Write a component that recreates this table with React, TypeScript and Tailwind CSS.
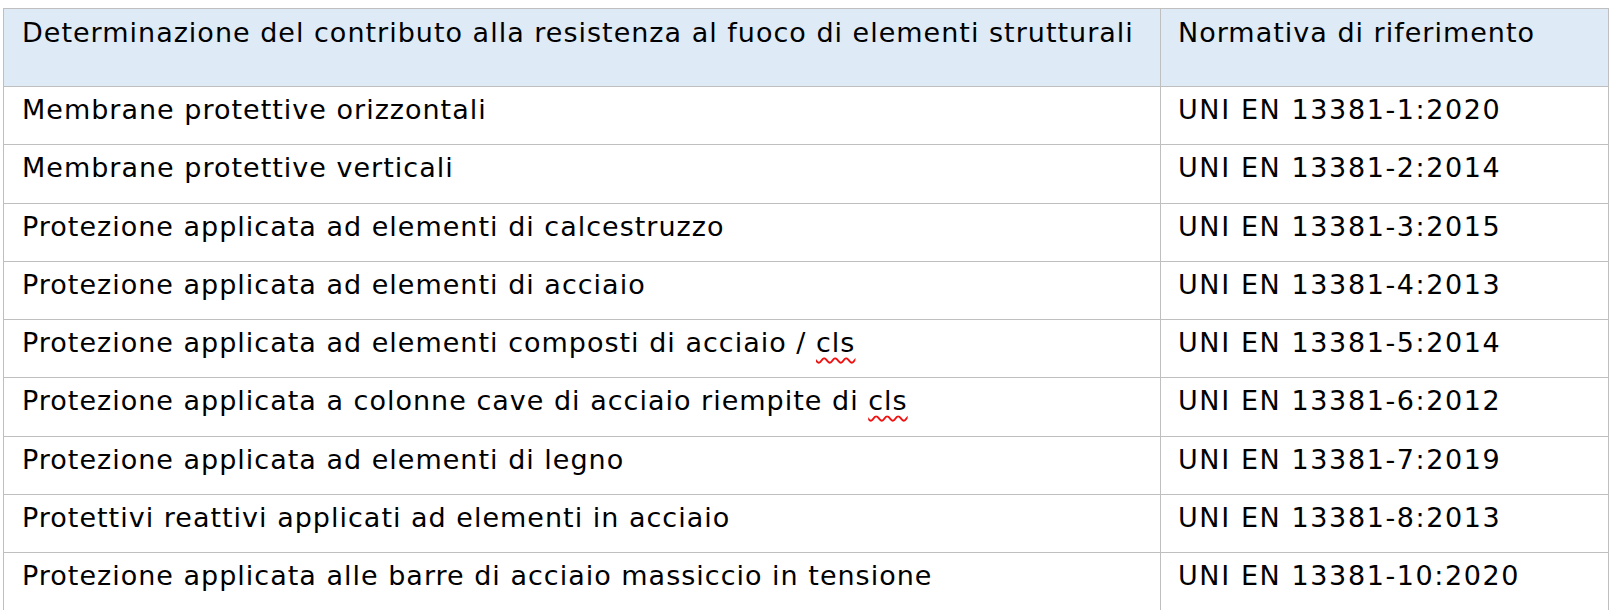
const rows: [string, string][] = [
  ["Membrane protettive orizzontali", "UNI EN 13381-1:2020"],
  ["Membrane protettive verticali", "UNI EN 13381-2:2014"],
  ["Protezione applicata ad elementi di calcestruzzo", "UNI EN 13381-3:2015"],
  ["Protezione applicata ad elementi di acciaio", "UNI EN 13381-4:2013"],
  ["Protezione applicata ad elementi composti di acciaio / |cls", "UNI EN 13381-5:2014"],
  ["Protezione applicata a colonne cave di acciaio riempite di |cls", "UNI EN 13381-6:2012"],
  ["Protezione applicata ad elementi di legno", "UNI EN 13381-7:2019"],
  ["Protettivi reattivi applicati ad elementi in acciaio", "UNI EN 13381-8:2013"],
  ["Protezione applicata alle barre di acciaio massiccio in tensione", "UNI EN 13381-10:2020"],
];

// "|" marks the word the spell checker underlined
const Label = ({ text }: { text: string }) => {
  const [plain, flagged] = text.split("|");
  return (
    <>
      {plain}
      {flagged && (
        <span className="underline decoration-wavy decoration-[#f01010] decoration-2 underline-offset-[5px]">
          {flagged}
        </span>
      )}
    </>
  );
};

const App = () => {
  return (
    <div
      className="w-[1612px] h-[610px] overflow-hidden bg-white pt-2 pl-[3px] text-[27px] leading-[32px] tracking-[1px] text-black"
      style={{ fontFamily: '"DejaVu Sans", Verdana, sans-serif' }}
    >
      <div className="w-[1606px] border-l border-t border-r border-[#bfbfbf]">
        <div className="grid grid-cols-[1157px_1fr] h-[78px] bg-[#deeaf6] border-b border-[#bfbfbf]">
          <div className="pl-[18px] pt-[8px] border-r border-[#bfbfbf] whitespace-nowrap">
            Determinazione del contributo alla resistenza al fuoco di elementi strutturali
          </div>
          <div className="pl-[17px] pt-[8px] whitespace-nowrap">Normativa di riferimento</div>
        </div>
        {rows.map(([label, norm]) => (
          <div key={norm} className="grid grid-cols-[1157px_1fr] h-[58.3px] border-b border-[#bfbfbf]">
            <div className="pl-[18px] pt-[7px] border-r border-[#bfbfbf] whitespace-nowrap">
              <Label text={label} />
            </div>
            <div className="pl-[17px] pt-[7px] whitespace-nowrap tracking-[1.6px]">{norm}</div>
          </div>
        ))}
      </div>
    </div>
  );
};

export default App;
